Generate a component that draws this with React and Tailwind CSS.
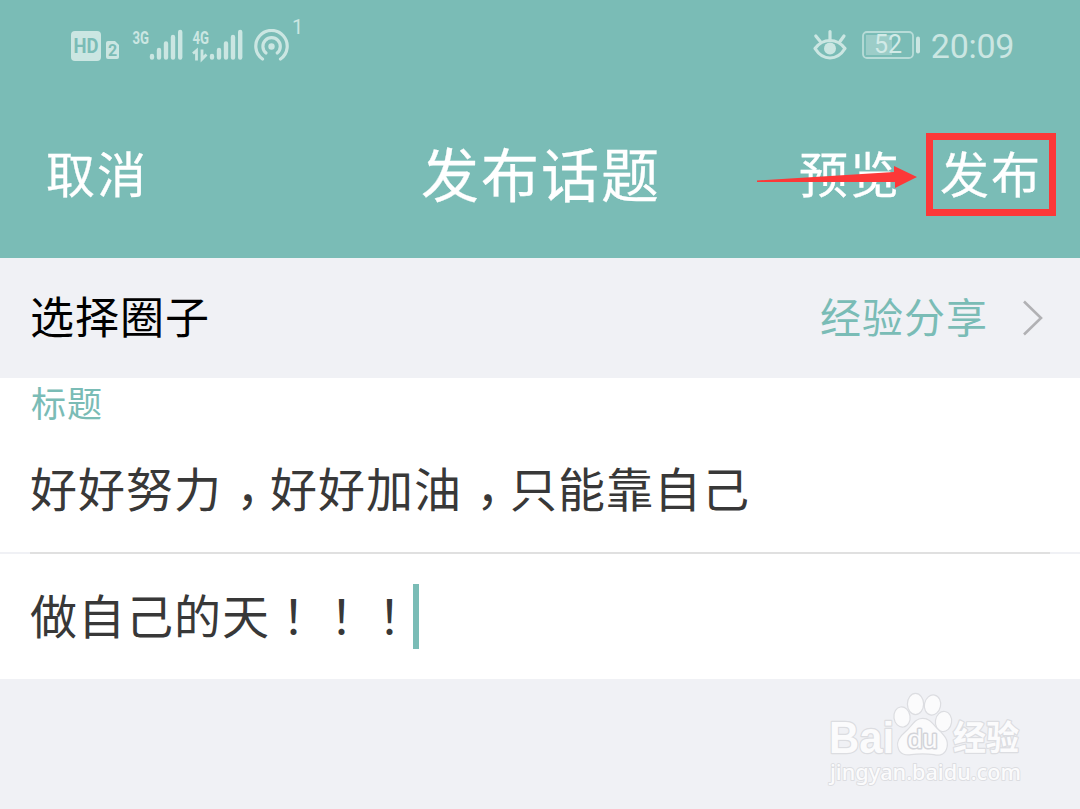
const cjk = "font-['Noto_Sans_CJK_SC',sans-serif]";

const Signal = () => (
  <svg width="34" height="32" viewBox="0 0 34 32" stroke="#cbe6e2" strokeWidth="4.4" strokeLinecap="round">
    <path d="M3 27v1.500M10 21v7.500M17 14.500v14M24 8v20.500M31.200 3v25.500" />
  </svg>
);

const HdBadge = () => (
  <svg width="49" height="32" viewBox="0 0 49 32">
    <rect x="0" y="2" width="30" height="30" rx="4" fill="#cbe6e2" />
    <text x="15" y="24" textAnchor="middle" textLength="25" lengthAdjust="spacingAndGlyphs" fontFamily="Roboto, sans-serif" fontWeight="700" fontSize="20" fill="#7abcb6">HD</text>
    <path d="M37 12h7l4 4v12q0 2-2 2H37q-2 0-2-2V14q0-2 2-2z" fill="#cbe6e2" />
    <text x="41.500" y="27" textAnchor="middle" fontFamily="Roboto, sans-serif" fontWeight="700" fontSize="16" fill="#7abcb6">2</text>
  </svg>
);

const Network = ({ label, data }) => (
  <div className="flex items-end">
    <svg className="overflow-visible" width="18" height="32" viewBox="0 0 18 32">
      <text x="0.500" y="14.500" textLength="16.500" lengthAdjust="spacingAndGlyphs" fontFamily="Roboto, sans-serif" fontWeight="700" fontSize="18.500" fill="#cbe6e2">{label}</text>
      {data && <path d="M1 24.500l3.500-3v10M10 20.500v9.500l4.500-4.500" fill="none" stroke="#cbe6e2" strokeWidth="2.8" />}
    </svg>
    <div className="-ml-px"><Signal /></div>
  </div>
);

const Hotspot = () => (
  <svg width="36" height="32" viewBox="0 0 36 32" fill="none" stroke="#cbe6e2" strokeWidth="3.2" strokeLinecap="round">
    <path d="M8.500 30a15.700 15.700 0 1 1 18 0" />
    <path d="M12 24a8.700 8.700 0 1 1 11.200 0" />
    <circle cx="17.500" cy="17.500" r="3.200" fill="#cbe6e2" stroke="none" />
  </svg>
);

const Eye = () => (
  <svg width="34" height="32" viewBox="0 0 34 32" fill="none" stroke="#cbe6e2" strokeWidth="3.2" strokeLinecap="round">
    <path d="M2 19.500Q8 11.500 17 11.500T32 19.500Q26 29 17 29T2 19.500z" strokeLinejoin="round" />
    <path d="M17 2.500v8M2.800 7l4.500 5.500M31 7l-4 5.500" />
    <circle cx="17" cy="19.500" r="6" fill="#cbe6e2" stroke="none" />
  </svg>
);

const Battery = () => (
  <svg width="58" height="28" viewBox="0 0 58 28">
    <rect x="1" y="1" width="50" height="26" rx="4" fill="none" stroke="#b8dcd8" strokeWidth="1.8" />
    <rect x="4" y="4" width="26" height="20" fill="#9ccdc8" />
    <text x="26" y="22.300" textAnchor="middle" fontFamily="Roboto, sans-serif" fontSize="25" fill="#d2eae7">52</text>
    <rect x="54" y="5.500" width="4" height="17" rx="2" fill="#cbe6e2" />
  </svg>
);

const Watermark = () => (
  <svg width="206" height="100" viewBox="0 0 206 100" fill="#fbfbfc" stroke="#dcdde1" strokeWidth="2.4" paintOrder="stroke" strokeLinejoin="round">
    <text x="6" y="62.500" textLength="65" lengthAdjust="spacingAndGlyphs" fontFamily="Liberation Sans, sans-serif" fontWeight="700" fontSize="44">Bai</text>
    <ellipse cx="79" cy="27" rx="7.500" ry="9.500" transform="rotate(-8 79 27)" />
    <ellipse cx="92.500" cy="14" rx="7.500" ry="10" />
    <ellipse cx="109.500" cy="15" rx="7.500" ry="9.500" transform="rotate(12 109.500 15)" />
    <ellipse cx="120.500" cy="31.500" rx="7.500" ry="9.500" transform="rotate(8 120.500 31.500)" />
    <path d="M99.500 29C92 29 89 37 83 42C77 47 74 52 75.500 57C77 64 83 65 88 64Q99.500 62.500 111 64C118 66 122 63 123.500 57C125 50 121 46 116 41C110 36 108 29 99.500 29z" />
    <text x="99.500" y="58" textAnchor="middle" textLength="30" lengthAdjust="spacingAndGlyphs" fontFamily="Liberation Sans, sans-serif" fontSize="26" strokeWidth="3" stroke="#d3d4d9">du</text>
    <text x="130" y="60" textLength="66" lengthAdjust="spacingAndGlyphs" fontFamily="Noto Sans CJK SC, sans-serif" fontWeight="700" fontSize="34">经验</text>
    <text x="7" y="89.500" textLength="191" lengthAdjust="spacingAndGlyphs" fontFamily="Noto Sans, sans-serif" fontWeight="500" fontSize="22" strokeWidth="1.8">jingyan.baidu.com</text>
  </svg>
);

// the TC face centres the comma in its cell, drop it down to the baseline
const Comma = () => <span className="relative left-0.5 top-3 font-['Noto_Sans_CJK_TC',sans-serif]">，</span>;

const StatusBar = () => (
  <div className="flex h-[90px] items-start justify-between pl-[71px] pr-[66px] pt-[29px]">
    <div className="flex items-start">
      <HdBadge />
      <div className="ml-3"><Network label="3G" /></div>
      <div className="ml-[9px]"><Network label="4G" data /></div>
      <div className="ml-[11px]"><Hotspot /></div>
      <span className="-mt-3 ml-0.5 font-[Roboto,sans-serif] text-[20px] leading-5 text-[#cbe6e2]">1</span>
    </div>
    <div className="flex items-start">
      <Eye />
      <div className="ml-[15px] pt-0.5"><Battery /></div>
      <span className="ml-[11px] font-[Roboto,sans-serif] text-[34px] leading-[34px] tracking-[-0.3px] text-[#cbe6e2]">20:09</span>
    </div>
  </div>
);

export default function App() {
  return (
    <div className={`flex h-[809px] w-[1080px] flex-col overflow-hidden bg-[#f0f1f5] ${cjk}`}>
      <header className="h-[258px] bg-[#7abcb6]">
        <StatusBar />
        <div className="relative grid h-[169px] grid-cols-3 items-center text-white [-webkit-text-stroke:0.3px_white]">
          <button className="-mt-1.5 justify-self-start pl-[46px] text-[49px] leading-none tracking-[2px]">取消</button>
          <h1 className="-mt-1.5 justify-self-center whitespace-nowrap pl-0.5 text-[58px] leading-none tracking-[2px]">发布话题</h1>
          <div className="flex items-center justify-self-end pr-6 text-[49px] leading-none tracking-[2px]">
            <button className="-mt-1.5">预览</button>
            <button className="ml-[25px] flex h-[83px] w-[130px] items-center justify-center border-[7px] border-[#fc3838] pb-1.5">发布</button>
          </div>
          <svg className="absolute left-[757px] top-[74px]" width="162" height="28" viewBox="0 0 162 28" fill="#fc3838">
            <path d="M0 16.500L137 8V2L160 13L138 24V18L0 18z" />
          </svg>
        </div>
      </header>

      <section className="flex h-[120px] items-center justify-between pl-[30px] pr-9">
        <span className="-mt-[7px] text-[44px] leading-none tracking-[1px] text-black">选择圈子</span>
        <div className="flex items-center">
          <span className="-mt-1.5 text-[41px] leading-none tracking-[1px] text-[#7abcb6]">经验分享</span>
          <svg className="ml-[34px]" width="22" height="36" viewBox="0 0 22 36" fill="none" stroke="#b1b1b4" strokeWidth="2.6">
            <path d="M2 1.500L19 18L2 34.500" />
          </svg>
        </div>
      </section>

      <section className="h-[301px] bg-white text-[#383838]">
        <div className="flex h-[174px] flex-col pl-[30px] pt-1.5">
          <label className="pl-px text-[35px] leading-9 tracking-[1px] text-[#7abcb6]">标题</label>
          <p className="mt-[43px] text-[47px] leading-[48px] tracking-[1px]">
            好好努力<Comma />好好加油<Comma />只能靠自己
          </p>
        </div>
        <div className="h-0.5 bg-[#f0f1f5] px-[30px]">
          <div className="h-full bg-[#e0e0e0]" />
        </div>
        <div className="flex h-[125px] items-center pl-[30px]">
          <p className="-mt-1.5 text-[47px] leading-[48px] tracking-[1px]">
            做自己的天<span className="font-['Noto_Sans_CJK_JP',sans-serif]">！！！</span>
          </p>
          <span className="-ml-px h-[65px] w-1.5 bg-[#7abcb6]" />
        </div>
      </section>

      <footer className="flex flex-1 justify-end pr-[51px] pt-[11px]">
        <Watermark />
      </footer>
    </div>
  );
}
